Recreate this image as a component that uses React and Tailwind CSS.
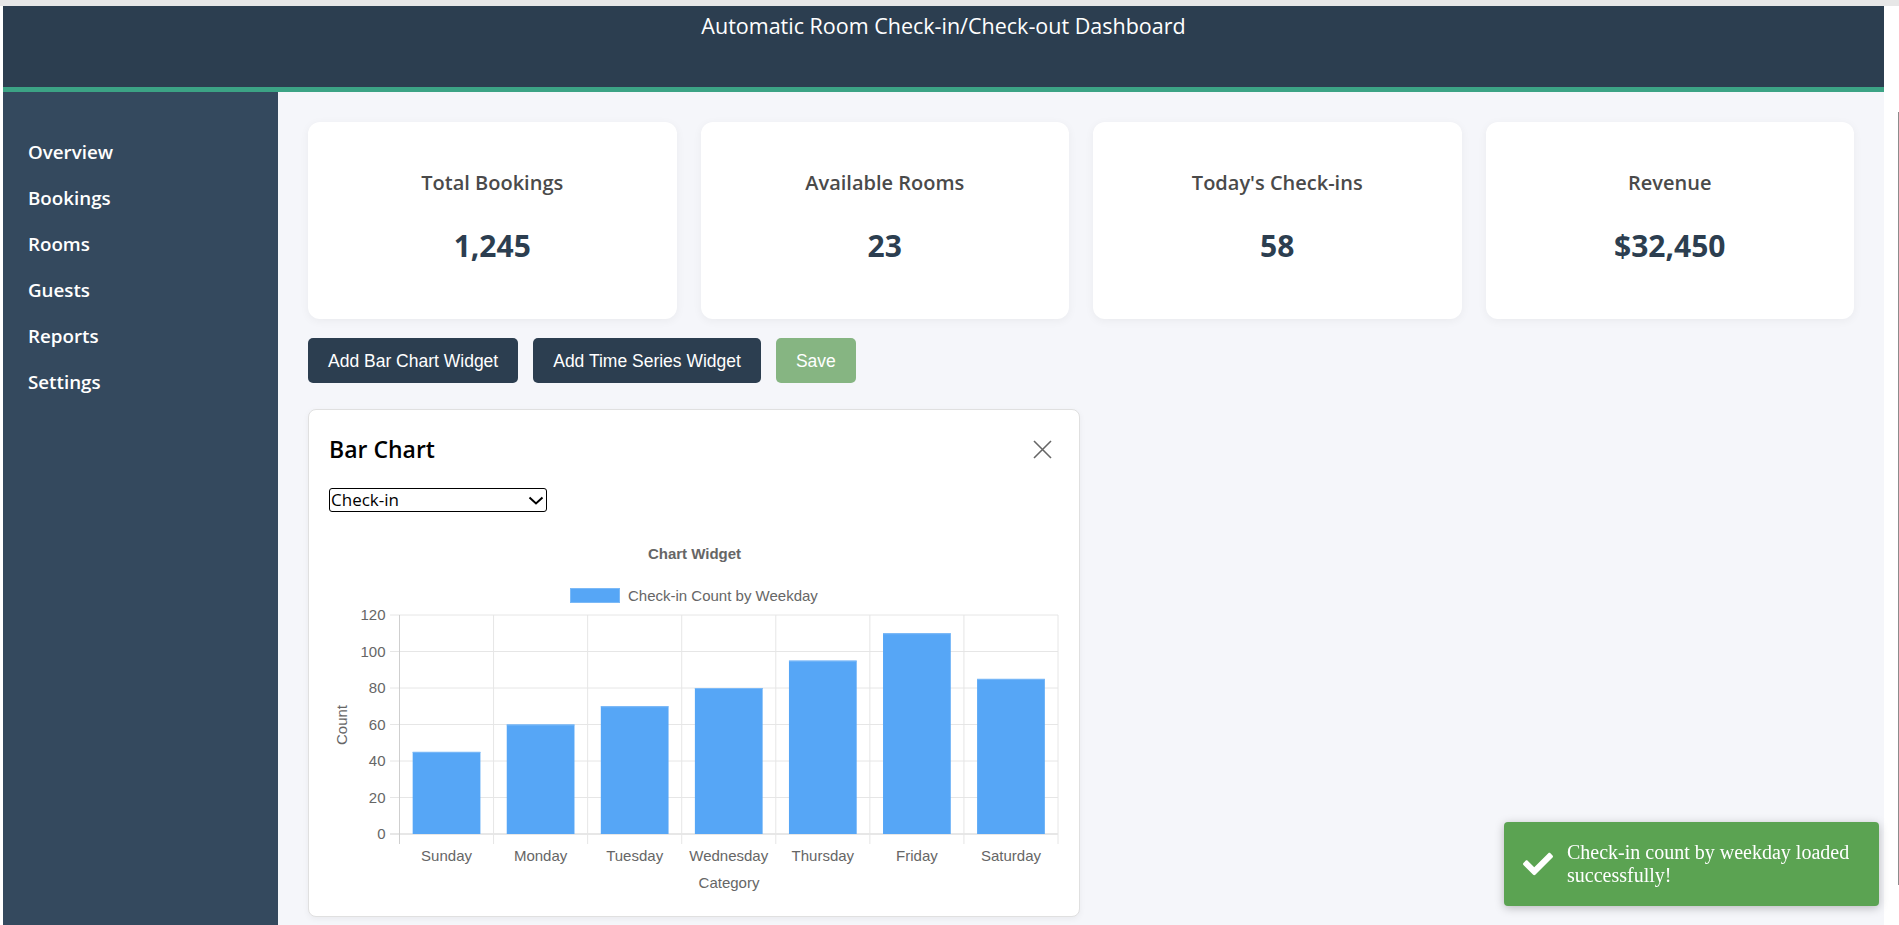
import React, { useState } from 'react';
import { FaCheck } from 'react-icons/fa';

const stats = [
  { label: 'Total Bookings', value: '1,245' },
  { label: 'Available Rooms', value: '23' },
  { label: "Today's Check-ins", value: '58' },
  { label: 'Revenue', value: '$32,450' },
];

const navItems = ['Overview', 'Bookings', 'Rooms', 'Guests', 'Reports', 'Settings'];

const weekdays = [
  ['Sunday', 45],
  ['Monday', 60],
  ['Tuesday', 70],
  ['Wednesday', 80],
  ['Thursday', 95],
  ['Friday', 110],
  ['Saturday', 85],
];

const chartFont = "'Liberation Sans', Arial, sans-serif";

function BarChartSvg() {
  const left = 70.5;
  const right = 729;
  const top = 103;
  const bottom = 322;
  const cw = (right - left) / weekdays.length;
  const ph = bottom - top;
  const ticks = [0, 20, 40, 60, 80, 100, 120];

  return (
    <svg width="730" height="384" className="block">
      <text x="365.5" y="46.5" textAnchor="middle" fontFamily={chartFont} fontSize="15" fontWeight="bold" fill="#666">
        Chart Widget
      </text>

      {/* legend */}
      <rect x="241.5" y="76.5" width="49" height="14" fill="#56a6f6" stroke="#7bb9f7" strokeWidth="1" />
      <text x="299" y="89" fontFamily={chartFont} fontSize="15" fill="#666">
        Check-in Count by Weekday
      </text>

      {/* horizontal grid */}
      {ticks.map((t) => {
        const y = bottom - (t / 120) * ph;
        return (
          <g key={t}>
            <line x1="61" x2={right} y1={y} y2={y} stroke={t === 0 ? '#cfcfcf' : '#e6e6e6'} strokeWidth="1" />
            <text x="56.5" y={y + 5.3} textAnchor="end" fontFamily={chartFont} fontSize="15" fill="#666">
              {t}
            </text>
          </g>
        );
      })}

      {/* vertical grid */}
      {Array.from({ length: weekdays.length + 1 }).map((_, i) => {
        const x = left + i * cw;
        return (
          <line key={i} x1={x} x2={x} y1={top} y2={bottom + 10} stroke={i === 0 ? '#cfcfcf' : '#e6e6e6'} strokeWidth="1" />
        );
      })}

      {/* bars */}
      {weekdays.map(([day, v], i) => {
        const h = (v / 120) * ph;
        const x = left + i * cw + cw * 0.14;
        return (
          <g key={day}>
            <rect x={x} y={bottom - h} width={cw * 0.72} height={h} fill="#56a6f6" />
            <line x1={x} x2={x + cw * 0.72} y1={bottom - h + 0.5} y2={bottom - h + 0.5} stroke="#7bb9f7" strokeWidth="1" />
            <text x={left + i * cw + cw / 2} y="348.5" textAnchor="middle" fontFamily={chartFont} fontSize="15" fill="#666">
              {day}
            </text>
          </g>
        );
      })}

      <text x="400" y="376" textAnchor="middle" fontFamily={chartFont} fontSize="15" fill="#666">
        Category
      </text>
      <text transform="translate(17.5,213) rotate(-90)" textAnchor="middle" fontFamily={chartFont} fontSize="15" fill="#666">
        Count
      </text>
    </svg>
  );
}

export default function App() {
  const [metric, setMetric] = useState('checkin');

  return (
    <div className="relative min-h-screen bg-white font-['Open_Sans',sans-serif]">
      <div className="h-[6px] bg-[#e7e7e7]" />
      <div className="flex">
        <div className="w-[3px] shrink-0" />

        <div className="flex h-[919px] w-[1881px] shrink-0 flex-col">
          <header className="h-[81px] bg-[#2c3e50] pt-[4px] text-center">
            <h1 className="text-[21.5px] leading-[32px] text-white">Automatic Room Check-in/Check-out Dashboard</h1>
          </header>
          <div className="h-[5px] bg-[#3ca385]" />

          <div className="flex flex-1">
            <aside className="w-[275px] shrink-0 bg-[#34495e] pl-[25px] pt-[37px]">
              <ul className="flex flex-col">
                {navItems.map((item) => (
                  <li key={item} className="flex h-[46px] items-center text-[18.75px] font-semibold text-white">
                    {item}
                  </li>
                ))}
              </ul>
            </aside>

            <main className="flex-1 bg-[#f5f6fa] px-[30px] pt-[30px]">
              <div className="grid grid-cols-4 gap-[24px]">
                {stats.map((s) => (
                  <div
                    key={s.label}
                    className="flex h-[197px] flex-col items-center rounded-[12px] bg-white pt-[51px] shadow-[0_2px_10px_rgba(0,0,0,0.05)]"
                  >
                    <h3 className="text-[20px] font-semibold leading-[20px] text-[#4a4a4a]">{s.label}</h3>
                    <p className="mt-[38px] text-[30px] font-bold leading-[30px] text-[#2c3e50]">{s.value}</p>
                  </div>
                ))}
              </div>

              <div className="mt-[19px] flex gap-[15px] font-['Liberation_Sans',Arial,sans-serif] text-[17.5px] text-white">
                <button className="h-[45px] rounded-[5px] bg-[#2c3e50] px-[20px] pt-[1px]">Add Bar Chart Widget</button>
                <button className="h-[45px] rounded-[5px] bg-[#2c3e50] px-[20px] pt-[1px]">Add Time Series Widget</button>
                <button className="h-[45px] rounded-[5px] bg-[#86b582] px-[20px] pt-[1px]">Save</button>
              </div>

              <div className="mt-[26px] h-[508px] w-[772px] rounded-[8px] border border-[#e0e0e0] bg-white px-[20px] pt-[20px] shadow-[0_2px_6px_rgba(0,0,0,0.05)]">
                <div className="flex h-[38px] items-center justify-between">
                  <h3 className="text-[23px] font-semibold leading-[24px] text-black">Bar Chart</h3>
                  <button className="flex h-[34px] w-[34px] items-center justify-center">
                    <svg width="19" height="19" viewBox="0 0 19 19">
                      <path d="M1 1L18 18M18 1L1 18" stroke="#666" strokeWidth="1.6" />
                    </svg>
                  </button>
                </div>

                <div className="relative mt-[20px] w-[218px]">
                  <select
                    value={metric}
                    onChange={(e) => setMetric(e.target.value)}
                    className="block h-[24px] w-full appearance-none rounded-[3px] border border-black bg-white pl-[1px] text-[17px] leading-[20px] text-black"
                  >
                    <option value="checkin">Check-in</option>
                    <option value="checkout">Check-out</option>
                  </select>
                  <svg className="pointer-events-none absolute right-[3px] top-[8px]" width="16" height="9" viewBox="0 0 16 9">
                    <path d="M1.5 1.5L8 7.5L14.5 1.5" fill="none" stroke="#000" strokeWidth="2" />
                  </svg>
                </div>

                <BarChartSvg />
              </div>
            </main>
          </div>
        </div>

        <div className="flex w-[15px] shrink-0 justify-end">
          <div className="mt-[106px] h-[773px] w-[1px] bg-[#8c8c8c]" />
        </div>
      </div>

      <div className="fixed left-[1504px] top-[822px] flex h-[84px] w-[375px] items-center rounded-[4px] bg-[#5ba352] pl-[19px] pr-[12px] shadow-[0_2px_10px_rgba(0,0,0,0.25)]">
        <FaCheck className="shrink-0 text-white" size={30} />
        <p className="ml-[14px] font-['Liberation_Serif',serif] text-[20px] leading-[23px] text-white">
          Check-in count by weekday loaded successfully!
        </p>
      </div>
    </div>
  );
}
